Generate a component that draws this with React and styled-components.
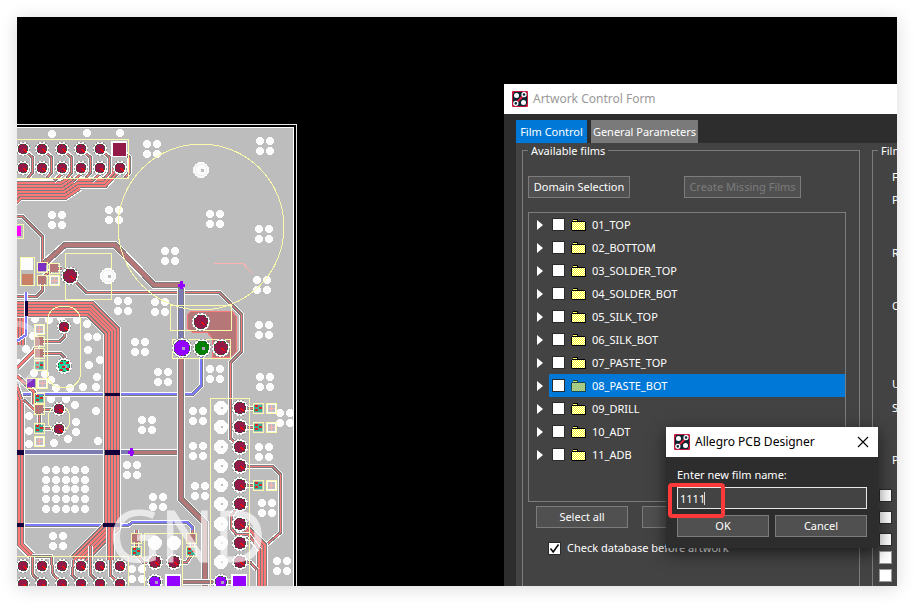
import React from "react";
import styled, { createGlobalStyle, css } from "styled-components";

const Global = createGlobalStyle`
  *, *::before, *::after { box-sizing: border-box; }
  body { margin: 0; background: #fff; }
  body, button, input { font-family: "Noto Sans", "Open Sans", sans-serif; font-size: 11px; }
`;

/* ---------- board drawing ---------- */

const C = {
  board: "#bdbdbd", grey: "#7d7d7d", red: "#ff7878", brown: "#b57777",
  maroon: "#921a48", purple: "#9400ff", yellow: "#fbfbae", white: "#fcfcfc",
  blue: "#7b7bff", steel: "#7b7bb2", teal: "#38b091", green: "#008000",
};

const QUADS = [
  [152, 149], [57, 220], [114, 215], [265, 146], [215, 219], [264, 234], [170, 256],
  [123, 306], [160, 307], [140, 347], [163, 377], [147, 425], [264, 330], [262, 285],
  [215, 374], [265, 382], [198, 416], [285, 418], [58, 541], [132, 470], [158, 502],
  [137, 574], [198, 451], [200, 491], [264, 452], [267, 508], [282, 566],
];
const VIAS = [
  [52, 134], [87, 133], [120, 133], [35, 319], [49, 320], [61, 318], [77, 320], [87, 324],
  [88, 337], [97, 337], [88, 350], [100, 360], [89, 365], [97, 377], [33, 336], [51, 380],
  [56, 388], [70, 388], [83, 387], [96, 387], [51, 399], [66, 399], [75, 405], [96, 411],
  [76, 422], [29, 416], [54, 443], [68, 439], [76, 432], [98, 441], [29, 431], [29, 444],
  [34, 373], [45, 374], [26, 349], [18, 363],
];
const HEADER_X = [23, 42, 62, 81, 100, 120];
const COLUMN_Y = [408, 427, 447, 466, 485, 504, 524, 543, 562];

const str = (pts) => pts.map((p) => p.join(",")).join(" ");

function shift(pts, d) {
  const normals = pts.slice(1).map(([x, y], i) => {
    const dx = x - pts[i][0];
    const dy = y - pts[i][1];
    const l = Math.hypot(dx, dy);
    return [-dy / l, dx / l];
  });
  return pts.map(([x, y], i) => {
    const a = normals[Math.max(0, i - 1)];
    const b = normals[Math.min(normals.length - 1, i)];
    const k = d / (1 + a[0] * b[0] + a[1] * b[1]);
    return [x + (a[0] + b[0]) * k, y + (a[1] + b[1]) * k];
  });
}

const Line = ({ pts, w = 1, c }) => (
  <polyline points={str(pts)} fill="none" stroke={c} strokeWidth={w} />
);
const Trace = ({ pts, w = 1, c = C.red, edge = 2 }) => (
  <>
    <Line pts={pts} w={w + edge + 2} c={C.white} />
    <Line pts={pts} w={w + edge} c={C.grey} />
    <Line pts={pts} w={w} c={c} />
  </>
);
const Bundle = ({ pts, n, pitch = 3 }) => (
  <>
    <Line pts={pts} w={n * pitch + 3} c={C.white} />
    <Line pts={pts} w={n * pitch + 1} c={C.grey} />
    {Array.from({ length: n }, (_, i) => (
      <Line key={i} pts={shift(pts, (i - (n - 1) / 2) * pitch)} c={C.red} w={pitch > 2 ? 2 : 1} />
    ))}
  </>
);
const Via = ({ x, y }) => <circle cx={x} cy={y} r="4" fill={C.white} />;
const Pad = ({ x, y, r = 5, c = C.maroon }) => (
  <>
    <circle cx={x} cy={y} r={r + 2} fill={C.white} stroke="#999" strokeDasharray="2 2" />
    <circle cx={x} cy={y} r={r} fill={c} stroke="#315a31" strokeDasharray="2 2" />
    {c === C.maroon && <path d={`M${x} ${y}l4 3`} stroke="#f00" />}
    {c !== C.maroon && <rect x={x} y={y - 1} width="3" height="3" fill="#b0a0c0" />}
  </>
);
const SquarePad = ({ x, y, c }) => (
  <>
    <rect x={x - 8} y={y - 8} width="16" height="16" fill={C.white} />
    <rect x={x - 6} y={y - 6} width="13" height="13" fill={c} />
  </>
);
const BigVia = ({ x, y }) => (
  <>
    <circle cx={x} cy={y} r="8" fill={C.white} />
    <circle cx={x} cy={y} r="6" fill="none" stroke="#eee" />
    <rect x={x} y={y - 1} width="3" height="3" fill={C.board} />
  </>
);
const Chip = ({ x, y, kind }) => (
  <>
    <rect x={x - 5} y={y - 5} width="10" height="10" fill="none" stroke={C.yellow} />
    {kind === "teal" && (
      <>
        <rect x={x - 4} y={y - 3} width="8" height="7" fill={C.teal} />
        <path d={`M${x - 3} ${y - 2}h3M${x + 1} ${y}h3M${x - 3} ${y + 2}h3`} stroke="#d22" strokeWidth="2" />
      </>
    )}
    {kind === "brown" && <rect x={x - 4} y={y - 4} width="8" height="8" fill={C.brown} />}
    {kind === "purple" && <rect x={x - 4} y={y - 4} width="8" height="8" fill="#7e2fc4" />}
    {kind === "open" && (
      <>
        <rect x={x - 4} y={y - 4} width="8" height="8" fill={C.board} stroke={C.white} />
        <path d={`M${x - 3} ${y}h7M${x} ${y - 3}v7`} stroke="#ffb0b0" />
      </>
    )}
  </>
);
const Outline = ({ x, y, w, h, rx }) => (
  <rect x={x} y={y} width={w} height={h} rx={rx} fill="none" stroke={C.yellow} />
);

const BoardSvg = styled.svg`
  display: block;
  width: 287px;
  height: 462px;
  margin-top: 107px;
`;

function Board() {
  return (
    <BoardSvg viewBox="17 124 287 462" shapeRendering="crispEdges" role="img" aria-label="GND">
      <rect x="0" y="124.5" width="296.5" height="480" fill="#000" stroke="#e6e6e6" />
      <rect x="0" y="127.5" width="293.5" height="480" fill={C.board} stroke="#fff" />

      {QUADS.map(([x, y]) => (
        <g key={`${x}-${y}`}>
          <Via x={x - 5} y={y - 5} /><Via x={x + 5} y={y - 5} />
          <Via x={x - 5} y={y + 5} /><Via x={x + 5} y={y + 5} />
        </g>
      ))}
      {VIAS.map(([x, y]) => <Via key={`${x}-${y}`} x={x} y={y} />)}
      {[46, 56, 66, 75, 85].map((x) => [470, 480, 489, 499, 509].map((y) => <Via key={x * y} x={x} y={y} />))}

      <Bundle pts={[[10, 185], [64, 185], [76, 183], [104, 183], [116, 170]]} n={3} />
      <Bundle pts={[[10, 198], [18, 190], [64, 190], [76, 182]]} n={6} />
      {HEADER_X.map((x) => (
        <Trace key={x} pts={[[x, 149], [x + 9, 157], [x + 9, 173], [x + 5, 178]]} />
      ))}
      {[62, 81, 100].map((x) => <Trace key={x} pts={[[x, 168], [x, 174], [x - 8, 181]]} />)}

      <Trace pts={[[17, 216], [22, 216], [42, 236], [42, 262]]} />
      <Trace pts={[[45, 263], [65, 245], [115, 245], [154, 285], [181, 285]]} w={4} c={C.brown} />
      <Trace pts={[[70, 276], [86, 292], [219, 292], [241, 314], [241, 352], [230, 363], [230, 438], [240, 447]]} />
      <Trace pts={[[17, 296], [37, 296], [42, 291], [42, 278], [54, 268], [62, 268]]} />

      <Trace pts={[[181, 288], [181, 345]]} w={4} c={C.steel} />
      <Trace pts={[[201, 352], [201, 386], [193, 394], [17, 394]]} c={C.blue} w={2} edge={1} />
      <Trace pts={[[17, 452], [130, 452]]} c={C.steel} w={4} edge={0} />
      <Trace pts={[[130, 452], [181, 452]]} w={3} c={C.brown} />
      <Trace pts={[[181, 354], [181, 499], [205, 523], [205, 586]]} w={4} c={C.brown} />
      <Trace pts={[[17, 525], [129, 525], [133, 522], [187, 522], [192, 527], [192, 540]]} c={C.blue} w={2} edge={1} />
      <Trace pts={[[182, 582], [240, 582]]} w={2} c={C.brown} />

      <Bundle pts={[[18, 345], [18, 316], [26, 309], [90, 309], [112, 331], [112, 528]]} n={4} />
      <Bundle pts={[[10, 309], [90, 309], [112, 331], [112, 526], [76, 562]]} n={5} />
      <Bundle pts={[[110, 524], [110, 560]]} n={2} />
      <Bundle pts={[[20, 400], [20, 544], [32, 556]]} n={2} />
      <Bundle pts={[[15, 385], [20, 400]]} n={2} />
      <Trace pts={[[32, 556], [51, 556], [53, 574], [62, 584]]} />
      <Trace pts={[[32, 556], [33, 575], [42, 584]]} />
      <Trace pts={[[90, 546], [90, 574], [100, 584]]} />
      <Trace pts={[[74, 560], [72, 575], [81, 584]]} />
      <Trace pts={[[110, 560], [110, 575], [120, 584]]} />
      <Line pts={[[105, 394], [120, 394]]} w={3} c="#12003c" />
      <Line pts={[[105, 452], [120, 452]]} w={5} c="#12003c" />
      <Line pts={[[17, 452], [24, 452]]} w={5} c="#12003c" />
      <Line pts={[[17, 525], [24, 525]]} w={4} c="#12003c" />
      <Line pts={[[103, 525], [120, 525]]} w={4} c="#12003c" />
      <Line pts={[[26, 292], [26, 335], [17, 341]]} w={4} c={C.white} />
      <Line pts={[[26, 292], [26, 335], [17, 341]]} w={2} c={C.blue} />
      <Line pts={[[26, 301], [26, 316]]} w={3} c="#12003c" />

      <Bundle pts={[[17, 368], [34, 351], [39, 342]]} n={1} />
      <Bundle pts={[[17, 376], [34, 392], [34, 404]]} n={1} />
      <Trace pts={[[39, 341], [60, 341], [64, 337], [64, 327]]} />
      <Trace pts={[[39, 353], [60, 353], [64, 357], [64, 366]]} />
      <Trace pts={[[24, 400], [39, 414], [39, 428]]} />
      <Trace pts={[[39, 409], [59, 409]]} />
      <Trace pts={[[39, 428], [59, 429]]} />

      <Trace pts={[[240, 466], [272, 466], [280, 474], [280, 533], [265, 546], [265, 586]]} />
      <Bundle pts={[[240, 524], [262, 546], [262, 586]]} n={3} />
      <Trace pts={[[240, 504], [231, 516], [231, 528], [236, 534], [248, 534], [260, 550]]} />
      <Trace pts={[[240, 562], [250, 562], [257, 570]]} />
      {[408, 427, 485].map((y) => <Trace key={y} pts={[[240, y], [258, y]]} />)}
      <Trace pts={[[136, 530], [136, 554], [143, 562], [155, 562]]} />
      <Trace pts={[[192, 530], [192, 554], [187, 562], [174, 562]]} />

      <polygon
        points="187,315 191,311 232,311 236,316 236,352 231,357 212,357 212,338 207,332 192,332 187,328"
        fill={C.brown} stroke={C.red}
      />

      <circle cx="201" cy="227" r="83" fill="none" stroke={C.yellow} />
      <Line pts={[[214, 263.5], [243, 263.5], [252, 273]]} c="#ffb0b0" />
      <Outline x={10.5} y={139.5} w={118} h={39} />
      <Outline x={65.5} y={253.5} w={46} h={46} />
      <Outline x={170.5} y={305.5} w={61} h={25} />
      <Outline x={172.5} y={339.5} w={58} h={19} />
      <Outline x={210.5} y={398.5} w={39} h={200} />
      <Outline x={10.5} y={556.5} w={118} h={40} />
      <Outline x={144.5} y={533.5} w={38} h={60} />
      <Outline x={47.5} y={306.5} w={33} h={81} rx={14} />
      <Outline x={20.5} y={257.5} w={14} h={28} />
      <ellipse cx="59" cy="419" rx="11" ry="14" fill="none" stroke={C.yellow} />
      <rect x="10" y="224.5" width="13" height="14" fill="none" stroke={C.yellow} />
      <rect x="17" y="226" width="4" height="10" fill="#f0f" />

      {HEADER_X.map((x, i) => (
        <g key={x}>
          {i === 5 ? <SquarePad x={x - 1} y={149} c={C.maroon} /> : <Pad x={x} y={149} />}
          <Pad x={x} y={168} /><Pad x={x} y={566} /><Pad x={x} y={584} />
        </g>
      ))}
      {COLUMN_Y.map((y) => (
        <g key={y}><circle cx="221" cy={y} r="7" fill={C.white} /><Pad x={240} y={y} r={6} />
          <rect x="221" y={y - 1} width="2" height="2" fill={C.board} />
        </g>
      ))}
      {[155, 174].map((x) => (
        <g key={x}><circle cx={x} cy="543" r="7" fill={C.white} /><Pad x={x} y={562} r={6} /></g>
      ))}
      <Pad x={155} y={582} r={6} c={C.purple} />
      <SquarePad x={173} y={582} c={C.purple} />
      <Pad x={221} y={582} r={6} c={C.purple} />
      <SquarePad x={239} y={582} c={C.purple} />
      <BigVia x={201} y={170} /><BigVia x={108} y={276} />
      <Pad x={70} y={276} r={7} />
      <Pad x={201} y={322} r={7} />
      <Pad x={182} y={348} r={8} c={C.purple} />
      <Pad x={202} y={348} r={7} c={C.green} />
      <Pad x={221} y={348} r={7} />
      <Pad x={64} y={327} /><Pad x={59} y={409} /><Pad x={59} y={429} />
      <Pad x={64} y={366} r={6} c="#18d8a0" />
      <path d="M60 363h3M66 363h3M62 367h3M60 370h3M66 369h3" stroke="#c22" strokeWidth="2" />
      <rect x="21" y="258" width="12" height="12" fill={C.white} />
      <rect x="22" y="274" width="11" height="11" fill="#c88066" />
      <Chip x={42} y={267} kind="purple" /><Chip x={54} y={268} kind="brown" />
      <Chip x={42} y={280} kind="brown" /><Chip x={54} y={280} kind="open" />
      <Chip x={39} y={329} kind="open" /><Chip x={39} y={341} kind="brown" />
      <Chip x={39} y={353} kind="brown" /><Chip x={39} y={365} kind="teal" />
      <Chip x={31} y={383} kind="purple" /><Chip x={42} y={383} kind="open" />
      <Chip x={39} y={398} kind="teal" /><Chip x={39} y={409} kind="brown" />
      <Chip x={39} y={428} kind="teal" /><Chip x={39} y={441} kind="open" />
      {[408, 427, 485].map((y) => (
        <g key={y}><Chip x={258} y={y} kind="teal" /><Chip x={271} y={y} kind="open" /></g>
      ))}
      {[136, 191].map((x) => (
        <g key={x}><Chip x={x} y={538} kind="brown" /><Chip x={x} y={551} kind="teal" /></g>
      ))}
      <path d="M178 285h7M181 281v8M128 452h6M131 448v8" stroke={C.purple} strokeWidth="3" />
      <path d="M17 324a20 20 0 0 1 20 20v18a22 22 0 0 1-20 22" fill="none" stroke="#fff" strokeWidth="6" opacity=".35" />
      <text x="109" y="562" fontFamily="Open Sans, sans-serif" fontSize="71" fill="#fff" stroke="#fff" opacity=".66">GND</text>
    </BoardSvg>
  );
}

/* ---------- small drawings ---------- */

const AppIcon = () => (
  <svg width="16" height="16" viewBox="0 0 16 16" aria-hidden="true">
    <rect width="16" height="16" rx="1" fill="#c4183c" />
    <path d="M1 3h1V1h12v2h1v10h-1v2H2v-2H1z" fill="#0c2633" />
    <path d="M3.5 12.5 12 4" stroke="#e0213f" strokeWidth="2" />
    <circle cx="4.5" cy="4.5" r="2.5" fill="#fff" />
    <circle cx="11.5" cy="11.5" r="2.5" fill="#fff" />
    <circle cx="12" cy="3.5" r="2" fill="#0c2633" stroke="#fff" strokeWidth="1.3" />
    <circle cx="3.8" cy="12.3" r="2" fill="#0c2633" stroke="#fff" strokeWidth="1.3" />
  </svg>
);

const FolderIcon = ({ selected }) => {
  const id = selected ? "folder-selected" : "folder-plain";
  return (
    <svg width="15" height="12" viewBox="0 0 15 12" shapeRendering="crispEdges" aria-hidden="true">
      <defs>
        <pattern id={id} width="2" height="2" patternUnits="userSpaceOnUse">
          <rect width="2" height="2" fill={selected ? "#ccd85e" : "#ffff1c"} />
          <path d="M0 0h1v1H0zM1 1h1v1H1z" fill={selected ? "#7fbcaa" : "#fff"} />
        </pattern>
      </defs>
      <path d="M1 2h1V0h5v2h7v1h1v9H1v-1H0V3h1z" fill={selected ? "#1c4a4a" : "#000"} />
      <path d="M2 1h4v1H2z" fill={selected ? "#ccd85e" : "#ffff60"} />
      <path d="M1 3h13v8H1z" fill={`url(#${id})`} />
    </svg>
  );
};

/* ---------- controls ---------- */

const Button = styled.button`
  height: 22px;
  width: ${(p) => p.$width || "auto"};
  flex: ${(p) => (p.$grow ? "1 1 0" : "none")};
  padding: 0;
  border: 1px solid #7c7c7c;
  background: #505050;
  color: #fff;
  line-height: 20px;
  &:disabled { color: #7c7c7c; }
`;

const CheckBox = styled.input`
  appearance: none;
  flex: none;
  display: block;
  width: 13px;
  height: 13px;
  margin: 0;
  background: #fff;
  border: 1px solid ${(p) => (p.$light ? "#999" : "#2b2b2b")};
  &:checked {
    background: #fff url("data:image/svg+xml,%3Csvg xmlns='http://www.w3.org/2000/svg' viewBox='0 0 11 11'%3E%3Cpath d='M1.5 5.5 4.2 9 9.5 1.5' fill='none' stroke='%23000' stroke-width='1.5'/%3E%3C/svg%3E");
  }
`;

/* ---------- page ---------- */

const Page = styled.main`
  height: 100vh;
  padding: 17px;
  display: grid;
  grid-template-rows: minmax(0, 1fr);
`;
const Shadow = styled.div`
  display: grid;
  grid-template-rows: minmax(0, 1fr);
  box-shadow: 0 2px 17px rgba(0, 0, 0, 0.15);
`;
const Desktop = styled.section`
  position: relative;
  display: grid;
  grid-template-columns: 487px minmax(0, 1fr);
  grid-template-rows: minmax(0, 1fr);
  background: #000;
  overflow: hidden;
`;
const FormWindow = styled.section`
  margin-top: 67px;
  display: flex;
  flex-direction: column;
  overflow: hidden;
  background: #2d2d2d;
`;
const TitleBar = styled.header`
  flex: none;
  display: flex;
  align-items: center;
  gap: 5px;
  height: 30px;
  padding: 0 9px 0 8px;
  background: #fff;
  color: ${(p) => (p.$active ? "#000" : "#999")};
`;
const Title = styled.h1`
  flex: 1;
  margin: 0;
  font-size: 12px;
  font-weight: 400;
  line-height: 18px;
`;
const Tabs = styled.nav`
  flex: none;
  display: flex;
  gap: 4px;
  padding: 6px 0 0 12px;
`;
const Tab = styled.button`
  height: 23px;
  width: ${(p) => p.$width};
  padding: 0;
  border: 0;
  color: #fff;
  background: ${(p) => (p.$active ? "#0078d7" : "#7a7a7a")};
`;
const Panel = styled.div`
  flex: 1;
  min-height: 0;
  display: flex;
  gap: 12px;
  margin-left: 12px;
  padding-left: 6px;
  background: #434343;
`;
const Group = styled.fieldset`
  flex: none;
  width: ${(p) => p.$width};
  min-width: 0;
  margin: 0;
  padding: ${(p) => p.$top} 5px 0;
  border: 1px solid #7c7c7c;
  border-bottom: 0;
  color: #fff;
`;
const Legend = styled.legend`
  padding: 0 3px;
  line-height: 15px;
`;
const Toolbar = styled.div`
  display: flex;
  gap: ${(p) => p.$gap};
  padding-left: ${(p) => p.$indent || "0"};
`;
const FilmList = styled.ul`
  height: 290px;
  margin: 14px 8px 4px 0;
  padding: 0;
  border: 1px solid #7c7c7c;
  list-style: none;
`;
const FilmRow = styled.li`
  display: grid;
  grid-template-columns: 20px minmax(0, 1fr);
  align-items: center;
  height: 23px;
`;
const Arrow = styled.span`
  width: 0;
  height: 0;
  margin-left: 8px;
  border-left: 6px solid #fff;
  border-top: 5px solid transparent;
  border-bottom: 5px solid transparent;
`;
const FilmLabel = styled.label`
  display: flex;
  align-items: center;
  gap: 6px;
  height: 23px;
  padding-left: 3px;
  ${(p) => p.$selected && css`background: #0078d7;`}
`;
const CheckLabel = styled.label`
  display: flex;
  align-items: center;
  gap: 6px;
  margin-top: 12px;
  padding-left: 20px;
  line-height: 16px;
`;
const OptionList = styled.div`
  display: grid;
  justify-items: start;
  padding-left: 14px;
`;
const Option = styled.span`
  height: ${(p) => p.$height};
  line-height: 16px;
`;
const OptionChecks = styled.div`
  display: grid;
  gap: ${(p) => p.$gap};
  padding: 0 0 5px 1px;
`;

const Prompt = styled.section`
  position: absolute;
  left: 649px;
  top: 410px;
  width: 212px;
  background: #2d2d2d;
  color: #fff;
  box-shadow: 0 5px 16px rgba(0, 0, 0, 0.6);
`;
const PromptBody = styled.form`
  display: grid;
  gap: 6px;
  padding: 10px 11px 11px;
`;
const PromptLabel = styled.label`
  display: block;
  line-height: 16px;
`;
const NameField = styled.div`
  position: relative;
  margin-top: -2px;
`;
const NameInput = styled.input`
  display: block;
  width: 100%;
  height: 22px;
  padding: 0 2px;
  border: 1px solid #e8e8e8;
  outline: 0;
  background: #434343;
  color: #fff;
`;
const Marker = styled.div`
  position: absolute;
  left: -9px;
  top: -4px;
  width: 57px;
  height: 35px;
  border: 4px solid #fd3a3a;
  border-radius: 4px;
  pointer-events: none;
`;
const Caret = styled.span`
  position: absolute;
  left: 27px;
  top: 5px;
  width: 1px;
  height: 13px;
  background: #ddd;
`;
const CloseButton = styled.button`
  display: grid;
  padding: 0;
  border: 0;
  background: none;
`;

const FILMS = [
  "01_TOP", "02_BOTTOM", "03_SOLDER_TOP", "04_SOLDER_BOT", "05_SILK_TOP", "06_SILK_BOT",
  "07_PASTE_TOP", "08_PASTE_BOT", "09_DRILL", "10_ADT", "11_ADB",
];
const OPTIONS = [
  ["F", "23px"], ["P", "53px"], ["R", "53px"], ["O", "78px"], ["U", "24px"], ["S", "52px"], ["P", "37px"],
];

export default function App() {
  return (
    <Page>
      <Global />
      <Shadow>
        <Desktop>
          <Board />
          <FormWindow>
            <TitleBar><AppIcon /><Title>Artwork Control Form</Title></TitleBar>
            <Tabs>
              <Tab $active $width="71px">Film Control</Tab>
              <Tab $width="107px">General Parameters</Tab>
            </Tabs>
            <Panel>
              <Group $width="338px" $top="18px">
                <Legend>Available films</Legend>
                <Toolbar $gap="54px">
                  <Button $width="102px">Domain Selection</Button>
                  <Button $width="117px" disabled>Create Missing Films</Button>
                </Toolbar>
                <FilmList>
                  {FILMS.map((name) => (
                    <FilmRow key={name}>
                      <Arrow />
                      <FilmLabel $selected={name === "08_PASTE_BOT"}>
                        <CheckBox type="checkbox" />
                        <FolderIcon selected={name === "08_PASTE_BOT"} />
                        {name}
                      </FilmLabel>
                    </FilmRow>
                  ))}
                </FilmList>
                <Toolbar $gap="14px" $indent="8px">
                  <Button $width="92px">Select all</Button>
                  <Button $width="92px" aria-label="Add" />
                </Toolbar>
                <CheckLabel>
                  <CheckBox type="checkbox" defaultChecked />
                  Check database before artwork
                </CheckLabel>
              </Group>
              <Group $width="200px" $top="11px">
                <Legend>Film</Legend>
                <OptionList>
                  {OPTIONS.map(([text, height], i) => <Option key={i} $height={height}>{text}</Option>)}
                </OptionList>
                <OptionChecks $gap="9px">
                  {[0, 1, 2].map((i) => <CheckBox key={i} type="checkbox" aria-label="Film option" />)}
                </OptionChecks>
                <OptionChecks $gap="5px">
                  {[3, 4].map((i) => <CheckBox key={i} type="checkbox" $light aria-label="Film option" />)}
                </OptionChecks>
              </Group>
            </Panel>
          </FormWindow>

          <Prompt>
            <TitleBar $active>
              <AppIcon />
              <Title as="h2">Allegro PCB Designer</Title>
              <CloseButton aria-label="Close">
                <svg width="12" height="12" viewBox="0 0 12 12">
                  <path d="M1 1l10 10M11 1 1 11" stroke="#000" strokeWidth="1.1" />
                </svg>
              </CloseButton>
            </TitleBar>
            <PromptBody onSubmit={(e) => e.preventDefault()}>
              <PromptLabel htmlFor="film-name">Enter new film name:</PromptLabel>
              <NameField>
                <NameInput id="film-name" defaultValue="1111" />
                <Caret />
                <Marker />
              </NameField>
              <Toolbar $gap="6px">
                <Button $grow>OK</Button>
                <Button $grow type="button">Cancel</Button>
              </Toolbar>
            </PromptBody>
          </Prompt>
        </Desktop>
      </Shadow>
    </Page>
  );
}
